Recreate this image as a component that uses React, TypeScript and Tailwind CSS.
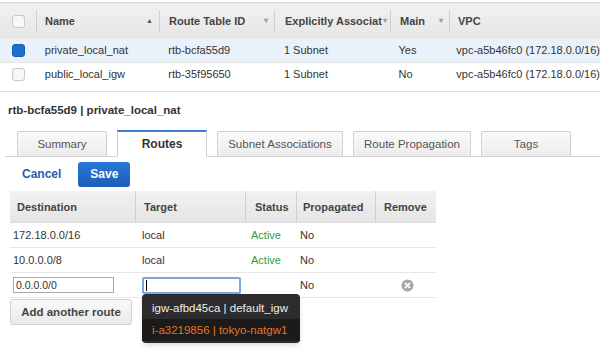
import React from 'react'

const font = { fontFamily: '"Liberation Sans", Arial, sans-serif' }

const Caret = () => <span className="text-[8px] text-gray-400">▾</span>

const Checkbox = ({ checked }: { checked?: boolean }) => (
  <div
    className={
      checked
        ? 'w-[13px] h-[13px] rounded-[3px] bg-[#1f6fd0] border border-[#1a5bb0]'
        : 'w-[13px] h-[13px] rounded-[3px] bg-[#f7f7f7] border border-[#c9c9c9]'
    }
  />
)

const tabs = ['Summary', 'Routes', 'Subnet Associations', 'Route Propagation', 'Tags']
const tabW = ['w-[90px]', 'w-[90px]', 'w-[126px]', 'w-[118px]', 'w-[90px]']

const App = () => {
  return (
    <div className="w-[600px] h-[351px] bg-white overflow-hidden text-[11px] text-[#333] whitespace-nowrap" style={font}>
      {/* route table list */}
      <div className="border-t border-[#d5d5d5] mt-[2px]">
        <div className="flex h-[36px] items-center bg-gradient-to-b from-[#f1f1f1] to-[#e6e6e6] font-bold text-[#444]">
          <div className="w-[37px] flex justify-center border-r border-[#d0d0d0] h-[22px] items-center"><Checkbox /></div>
          <div className="w-[123px] pl-[8px] pr-[6px] flex justify-between items-center border-r border-[#d0d0d0] h-[22px]">
            <span>Name</span><span className="text-[7px] text-[#555]">▲</span>
          </div>
          <div className="w-[115px] pl-[9px] pr-[6px] flex justify-between items-center border-r border-[#d0d0d0] h-[22px]">
            <span>Route Table ID</span><Caret />
          </div>
          <div className="w-[116px] pl-[10px] pr-[3px] flex justify-between items-center border-r border-[#d0d0d0] h-[22px] overflow-hidden">
            <span className="overflow-hidden">Explicitly Associat</span><Caret />
          </div>
          <div className="w-[59px] pl-[9px] pr-[6px] flex justify-between items-center border-r border-[#d0d0d0] h-[22px]">
            <span>Main</span><Caret />
          </div>
          <div className="pl-[8px]">VPC</div>
        </div>
        <div className="flex h-[24px] items-center bg-[#e9f1fb] border-b border-[#e4e4e4]">
          <div className="w-[37px] flex justify-center"><Checkbox checked /></div>
          <div className="w-[123px] pl-[8px]">private_local_nat</div>
          <div className="w-[115px] pl-[9px]">rtb-bcfa55d9</div>
          <div className="w-[116px] pl-[10px]">1 Subnet</div>
          <div className="w-[59px] pl-[9px]">Yes</div>
          <div className="pl-[8px]">vpc-a5b46fc0 (172.18.0.0/16)</div>
        </div>
        <div className="flex h-[23px] items-center bg-white">
          <div className="w-[37px] flex justify-center"><Checkbox /></div>
          <div className="w-[123px] pl-[8px]">public_local_igw</div>
          <div className="w-[115px] pl-[9px]">rtb-35f95650</div>
          <div className="w-[116px] pl-[10px]">1 Subnet</div>
          <div className="w-[59px] pl-[9px]">No</div>
          <div className="pl-[8px]">vpc-a5b46fc0 (172.18.0.0/16)</div>
        </div>
      </div>
      <div className="border-t border-[#dcdcdc] mt-[5px]" />

      <div className="pl-[8px] pt-[10px] font-bold text-[11.5px] text-[#333]">rtb-bcfa55d9 | private_local_nat</div>

      {/* tabs */}
      <div className="mt-[11px] ml-[5px] flex items-end gap-[10px] pl-[12px] border-b border-[#d3d3d3] h-[27px]">
        {tabs.map((t, i) =>
          i === 1 ? (
            <div key={t} className={`${tabW[i]} h-[27px] -mb-px bg-white border border-[#cfcfcf] border-b-white border-t-2 border-t-[#3a7fcf] flex items-center justify-center font-bold text-[#333] text-[12px]`}>
              {t}
            </div>
          ) : (
            <div key={t} className={`${tabW[i]} h-[25px] bg-gradient-to-b from-[#fafafa] to-[#ececec] border border-[#d0d0d0] border-b-0 rounded-t-[2px] flex items-center justify-center text-[#555] text-[11.5px]`}>
              {t}
            </div>
          )
        )}
      </div>

      {/* actions */}
      <div className="flex items-center mt-[4px] pl-[22px] h-[26px]">
        <span className="font-bold text-[#2a5da8] text-[12px]">Cancel</span>
        <div className="ml-[17px] w-[52px] h-[25px] rounded-[3px] bg-gradient-to-b from-[#2a78d6] to-[#1a5eb8] text-white font-bold text-[12px] flex items-center justify-center">
          Save
        </div>
      </div>

      {/* routes table */}
      <div className="relative ml-[10px] mt-[4px] w-[426px]">
        <div className="flex h-[32px] items-center bg-gradient-to-b from-[#f2f2f2] to-[#e5e5e5] font-bold text-[#444] border-b border-[#dcdcdc]">
          <div className="w-[126px] pl-[7px] h-full flex items-center border-r border-[#d0d0d0]">Destination</div>
          <div className="w-[110px] pl-[8px] h-full flex items-center border-r border-[#d0d0d0]">Target</div>
          <div className="w-[51px] pl-[9px] h-full flex items-center border-r border-[#d0d0d0]">Status</div>
          <div className="w-[79px] pl-[6px] h-full flex items-center border-r border-[#d0d0d0]">Propagated</div>
          <div className="pl-[8px]">Remove</div>
        </div>
        <div className="flex h-[25px] items-center border-b border-[#e6e6e6]">
          <div className="w-[126px] pl-[3px]">172.18.0.0/16</div>
          <div className="w-[110px] pl-[6px]">local</div>
          <div className="w-[51px] pl-[5px] text-[#3a9a3a]">Active</div>
          <div className="w-[79px] pl-[3px]">No</div>
        </div>
        <div className="flex h-[25px] items-center border-b border-[#e6e6e6]">
          <div className="w-[126px] pl-[3px]">10.0.0.0/8</div>
          <div className="w-[110px] pl-[6px]">local</div>
          <div className="w-[51px] pl-[5px] text-[#3a9a3a]">Active</div>
          <div className="w-[79px] pl-[3px]">No</div>
        </div>
        <div className="flex h-[25px] items-center border-b border-[#e6e6e6]">
          <div className="w-[126px] pl-[3px]">
            <div className="w-[101px] h-[16px] border border-[#aaa] text-[10.5px] leading-[14px] pl-[2px]">0.0.0.0/0</div>
          </div>
          <div className="w-[110px] pl-[6px]">
            <div className="w-[99px] h-[17px] border-2 border-[#7aa7de] rounded-[2px] flex items-center pl-[2px]">
              <div className="w-px h-[11px] bg-black" />
            </div>
          </div>
          <div className="w-[51px]" />
          <div className="w-[79px] pl-[3px]">No</div>
          <div className="flex-1 flex justify-center pl-[2px]">
            <svg width="13" height="13" viewBox="0 0 13 13">
              <circle cx="6.5" cy="6.5" r="6" fill="#a5a5a5" />
              <path d="M4.3 4.3 L8.7 8.7 M8.7 4.3 L4.3 8.7" stroke="#fff" strokeWidth="1.7" strokeLinecap="round" />
            </svg>
          </div>
        </div>
        <div className="mt-[1px] w-[122px] h-[26px] rounded-[3px] border border-[#cfcfcf] bg-gradient-to-b from-[#fafafa] to-[#e9e9e9] font-bold text-[11.5px] text-[#444] flex items-center justify-center">
          Add another route
        </div>

        {/* autocomplete menu */}
        <div className="absolute left-[132px] top-[103px] w-[158px] h-[49px] rounded-[4px] bg-[#2c2c2c] shadow-md pt-[3px] text-[11.5px]">
          <div className="h-[22px] flex items-center pl-[10px] text-[#eeeeee]">igw-afbd45ca | default_igw</div>
          <div className="h-[22px] flex items-center pl-[10px] text-[#e8731e] bg-[#1b1b1b]">i-a3219856 | tokyo-natgw1</div>
        </div>
      </div>
    </div>
  )
}

export default App
